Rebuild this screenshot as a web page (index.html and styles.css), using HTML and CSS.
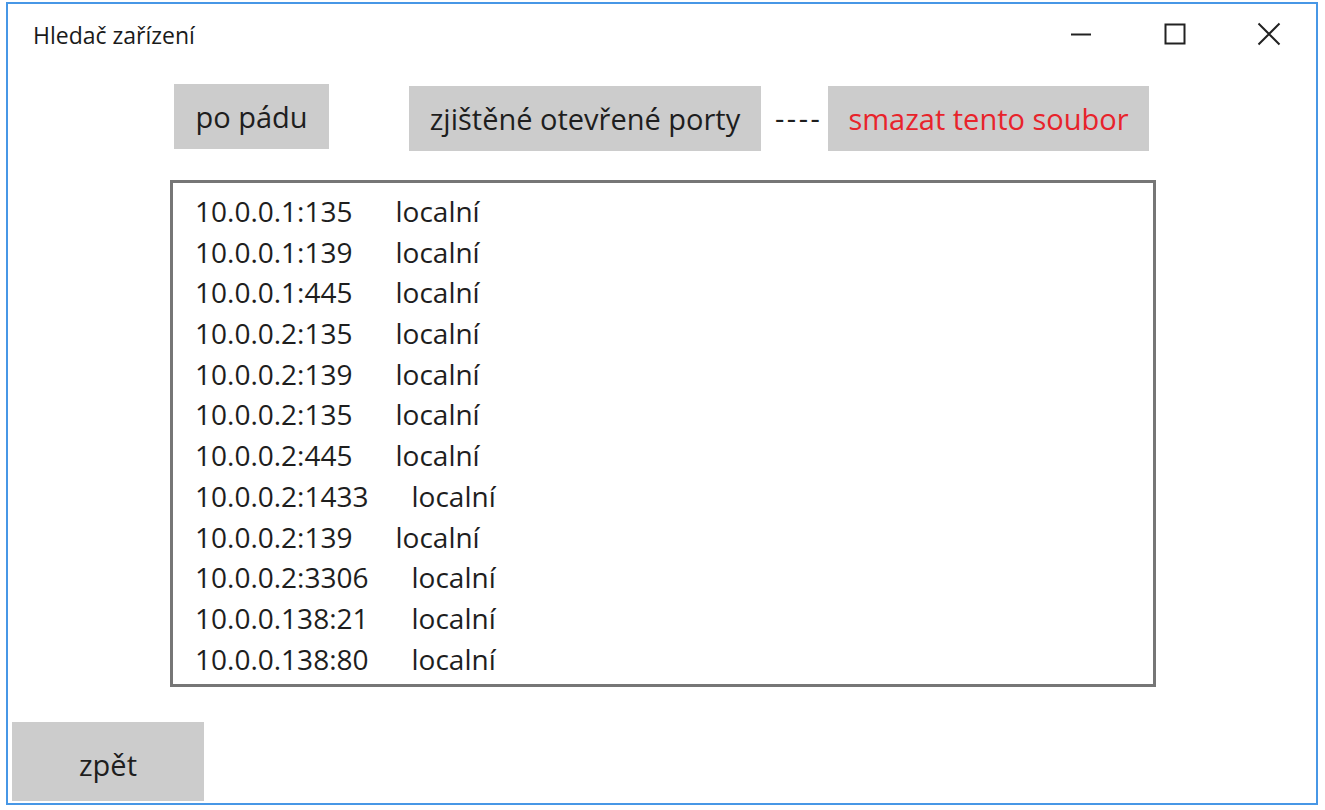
FILE: index.html
```html
<!DOCTYPE html>
<html lang="cs">
<head>
<meta charset="utf-8">
<title>Hledač zařízení</title>
<link rel="stylesheet" href="styles.css">
</head>
<body>
<div class="window">
  <div class="titlebar">
    <span class="title">Hledač zařízení</span>
    <div class="controls">
      <span class="ctl"><svg width="22" height="22" viewBox="0 0 22 22"><line x1="1" y1="11.5" x2="21" y2="11.5" stroke="#222" stroke-width="2"/></svg></span>
      <span class="ctl"><svg width="22" height="22" viewBox="0 0 22 22"><rect x="1.5" y="1.5" width="19" height="19" fill="none" stroke="#222" stroke-width="2"/></svg></span>
      <span class="ctl"><svg width="24" height="24" viewBox="0 0 24 24"><path d="M1.5 1.5 L22.5 22.5 M22.5 1.5 L1.5 22.5" stroke="#222" stroke-width="2" fill="none"/></svg></span>
    </div>
  </div>
  <div class="toolbar">
    <div class="btn btn-crash">po pádu</div>
    <div class="btn btn-ports">zjištěné otevřené porty</div>
    <span class="dashes">----</span>
    <div class="btn btn-delete">smazat tento soubor</div>
  </div>
  <div class="list">
    <div class="row"><span class="addr">10.0.0.1:135</span><span class="loc">localní</span></div>
    <div class="row"><span class="addr">10.0.0.1:139</span><span class="loc">localní</span></div>
    <div class="row"><span class="addr">10.0.0.1:445</span><span class="loc">localní</span></div>
    <div class="row"><span class="addr">10.0.0.2:135</span><span class="loc">localní</span></div>
    <div class="row"><span class="addr">10.0.0.2:139</span><span class="loc">localní</span></div>
    <div class="row"><span class="addr">10.0.0.2:135</span><span class="loc">localní</span></div>
    <div class="row"><span class="addr">10.0.0.2:445</span><span class="loc">localní</span></div>
    <div class="row"><span class="addr">10.0.0.2:1433</span><span class="loc">localní</span></div>
    <div class="row"><span class="addr">10.0.0.2:139</span><span class="loc">localní</span></div>
    <div class="row"><span class="addr">10.0.0.2:3306</span><span class="loc">localní</span></div>
    <div class="row"><span class="addr">10.0.0.138:21</span><span class="loc">localní</span></div>
    <div class="row"><span class="addr">10.0.0.138:80</span><span class="loc">localní</span></div>
  </div>
  <div class="footer">
    <div class="btn btn-back">zpět</div>
  </div>
</div>
</body>
</html>
```
FILE: styles.css
```css
html, body {
  margin: 0;
  padding: 0;
  background: #ffffff;
}
body {
  width: 1325px;
  height: 810px;
  overflow: hidden;
  font-family: "Open Sans", "Noto Sans", sans-serif;
  color: #1e1e1e;
}
.window {
  box-sizing: border-box;
  margin: 2px 0 0 6px;
  width: 1312px;
  height: 803px;
  border: 2px solid #4797e6;
  background: #ffffff;
  display: flex;
  flex-direction: column;
}
.titlebar {
  height: 60px;
  display: flex;
  align-items: center;
  justify-content: space-between;
  flex: none;
}
.title {
  margin-left: 25px;
  margin-top: 2px;
  font-size: 23px;
  color: #1a1a1a;
}
.controls {
  display: flex;
  height: 100%;
}
.ctl {
  width: 94px;
  display: flex;
  align-items: center;
  justify-content: center;
}
.toolbar {
  display: flex;
  align-items: flex-start;
  margin-top: 20px;
  padding-left: 166px;
  height: 67px;
  flex: none;
}
.btn {
  box-sizing: border-box;
  background: #cccccc;
  display: flex;
  align-items: center;
  justify-content: center;
  font-size: 29px;
  color: #1e1e1e;
  flex: none;
}
.btn-crash {
  width: 155px;
  height: 65px;
}
.btn-ports {
  width: 352px;
  height: 65px;
  margin-left: 80px;
  margin-top: 2px;
}
.dashes {
  margin-left: 14px;
  margin-top: 14px;
  width: 53px;
  font-size: 29px;
  letter-spacing: 2.5px;
}
.btn-delete {
  width: 321px;
  height: 65px;
  margin-top: 2px;
  color: #e8232b;
}
.list {
  box-sizing: border-box;
  margin-top: 29px;
  margin-left: 162px;
  width: 986px;
  height: 507px;
  border: 3px solid #767676;
  padding: 8px 0 0 22px;
  flex: none;
}
.row {
  height: 40.7px;
  line-height: 40.7px;
  font-size: 28px;
  white-space: nowrap;
}
.loc {
  margin-left: 43px;
}
.footer {
  margin-top: 35px;
  padding-left: 4px;
  flex: none;
}
.btn-back {
  width: 192px;
  height: 79px;
  padding-top: 6px;
}
```
